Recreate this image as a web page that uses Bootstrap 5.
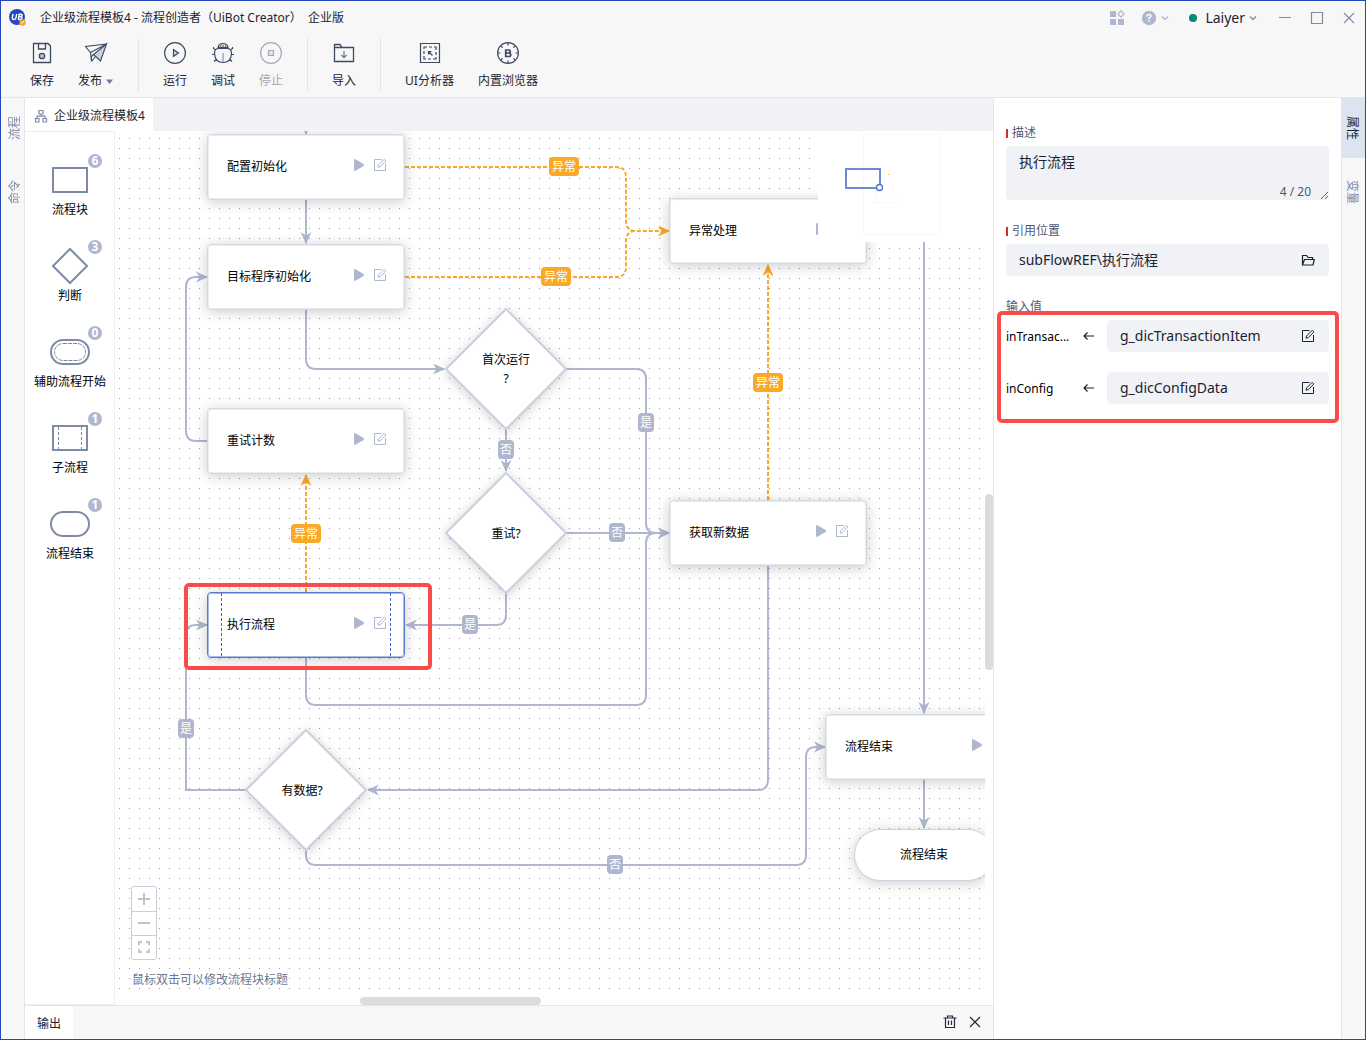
<!DOCTYPE html>
<html lang="zh-CN">
<head>
<meta charset="utf-8">
<meta name="viewport" content="width=device-width, initial-scale=1">
<title>企业级流程模板4 - 流程创造者</title>
<link href="https://cdn.jsdelivr.net/npm/bootstrap@5.3.0/dist/css/bootstrap.min.css" rel="stylesheet">
<style>
:root{--ink:#1b2333;--slate:#3d4a63;--muted:#7f8ba5;--edge:#afb6cf;--line:#e3e5eb;--chrome:#f7f7f7;--soft:#f0f2f6;--warn:#faa827;--alert:#fb4b48}
body{font-family:"Noto Sans","Noto Sans CJK SC",sans-serif;font-size:12px;line-height:18px;color:var(--ink);background:#fff}
svg{display:block;flex:none}
button,input,textarea{font:inherit;color:inherit;border:0;background:none;padding:0}
.app-shell{border:1px solid #2446b8;min-height:100vh}
.app-head{background:var(--chrome);border-bottom:1px solid var(--line)}
.title-row{height:33px;padding:0 0 0 8px}
.app-name{margin-left:14px}
.title-row .tools{color:var(--edge)}
.user-btn{font-size:14px;line-height:20px}
.user-btn svg{color:var(--muted)}
.online-dot{width:8px;height:8px;border-radius:50%;background:#028a76}
.win-btn{width:32px;color:var(--muted)}
.tool-row{padding:4px 17px 5px}
.tool-btn{padding:0 12px;height:54px;gap:6px;color:var(--ink)}
.tool-btn>svg{color:var(--slate);margin:0 -2px}
.tool-btn:disabled{color:#a3a7b0}
.tool-btn:disabled svg{color:#a3a9b8}
.tool-caret{margin-left:3px}
.tool-sep{width:1px;height:54px;margin:0 12px;background:var(--line)}
.side-rail{width:24px;background:var(--chrome);gap:4px}
.rail-left{border-right:1px solid var(--line)}
.rail-right{border-left:1px solid var(--line)}
.rail-tab{height:60px;width:100%;color:var(--muted)}
.rail-tab span{writing-mode:vertical-rl;text-orientation:sideways;line-height:16px}
.rail-left .rail-tab{padding-left:4px}
.rail-right .rail-tab{padding-right:4px}
.rail-left .rail-tab span{transform:rotate(180deg)}
.rail-tab.on{background:#dde3f1;color:var(--ink)}
.doc-tabs{height:33px;background:var(--soft)}
.doc-tab{background:#fff;padding:2px 8px 0 9px;gap:6px}
.palette{width:90px;border:1px solid #eceef3;border-left:0;padding:28px 0 0 1px}
.pal-item{margin-bottom:27px;gap:1px;cursor:grab;color:#000}
.pal-item svg{fill:none;stroke:#7f8ba5;stroke-width:2}
.pal-count{position:absolute;left:38px;top:-6px;width:14px;height:14px;border-radius:50%;background:var(--edge);color:#fff;font:bold 12px/14px "Open Sans",sans-serif;text-align:center}
.stage{padding:0 8px 8px 0;background:#fff}
.flow-view{overflow:hidden}
.flow-edges{position:absolute;left:0;top:0;width:100%;height:100%;pointer-events:none}
.flow-edges path{fill:none;stroke:var(--edge);stroke-width:2}
.flow-edges .err path{stroke:var(--warn);stroke-dasharray:4 2}
.flow-edges marker path{stroke:none;fill:var(--edge)}
.flow-edges marker.mk-err path{fill:var(--warn)}
.flow-node{position:absolute;width:198px;height:66px;border:1px solid #d3d9e3;outline:1px solid #e9edf2;outline-offset:-2px;border-radius:4px;background:#fff;box-shadow:0 2px 14px rgba(0,0,0,.2);color:#000;padding:0 17px 1px 19px}
.flow-node .acts{color:var(--edge);gap:8px;padding-bottom:4px}
.flow-node.picked{border-color:#5a79d0;outline-color:#a9baea}
.flow-node.picked::before,.flow-node.picked::after{content:"";position:absolute;top:0;bottom:0;width:1px;background:repeating-linear-gradient(#3f63c8 0 3px,transparent 3px 5px)}
.flow-node.picked::before{left:13px}
.flow-node.picked::after{right:13px}
.flow-decide{position:absolute;width:122px;height:122px;color:#000;line-height:19px;text-align:center}
.flow-decide svg{position:absolute;left:0;top:0;overflow:visible;filter:drop-shadow(0 2px 6px rgba(0,0,0,.18))}
.flow-decide span{position:relative}
.flow-end{position:absolute;width:140px;height:52px;border:1px solid #cdd2de;border-radius:26px;background:#fff;box-shadow:0 2px 14px rgba(0,0,0,.2);color:#000}
.edge-tag{position:absolute;transform:translate(-50%,-9px);background:var(--edge);color:#fff;border-radius:4px;padding:1px 2px;line-height:17px;white-space:nowrap}
.edge-tag.err{background:var(--warn);padding:1px 3px}
.mini-map{position:absolute;right:0;top:0;width:167px;height:111px;background:#fff}
.callout-box{position:absolute;border:4px solid var(--alert);border-radius:5px;pointer-events:none}
.zoom-box{position:absolute;left:16px;bottom:37px;width:26px;border:1px solid #c9cedb;border-radius:3px;background:#fff}
.zoom-box button{height:24px;color:#c4c4c4;padding-bottom:1px}
.zoom-box button+button{border-top:1px solid #c9cedb}
.flow-hint{position:absolute;left:17px;bottom:8px;color:#6b7893}
.thumb-y,.thumb-x{position:absolute;background:#dcdcdc;border-radius:4px}
.thumb-y{right:0;top:363px;width:8px;height:176px}
.thumb-x{left:245px;bottom:0;width:181px;height:8px}
.out-bar{height:34px;background:var(--chrome);border-top:1px solid var(--line);padding-right:12px}
.out-tab{padding:3px 12px 0;background:#fff;height:100%}
.out-acts{gap:12px;padding-bottom:1px}
.props{width:348px;border-left:1px solid var(--line);padding:24px 12px}
.props .cap{line-height:18px;padding-top:2px;margin-bottom:4px;color:#4e5870}
.props .must::before{content:"";width:2px;height:9px;background:#d9292b;margin-right:4px}
.field-box{background:var(--soft);border-radius:4px;height:32px;min-width:0;padding:0 14px 0 13px}
.field-box input,.note-box textarea{font-size:14px;line-height:20px;outline:0;min-width:0}
.note-box textarea{background:var(--soft);border-radius:4px;height:54px;padding:6px 13px;resize:vertical;display:block}
.note-count{position:absolute;right:18px;bottom:0;font-size:12px;line-height:16px;color:#4e5870}
.prop-block{margin-bottom:20px}
.arg-name{flex:none;width:70px;color:#000;padding-top:2px;white-space:nowrap}
.arg-arrow{margin:0 12px 0 7px}
.box-a{left:69px;top:452px;width:248px;height:87px}
.box-b{left:3px;top:213px;width:342px;height:112px}
#n1{left:92px;top:3px}#n2{left:92px;top:113px}#n3{left:92px;top:277px}#n4{left:92px;top:461px}
#n5{left:554px;top:67px}#n6{left:554px;top:369px}#n7{left:710px;top:583px}
#d1{left:330px;top:177px}#d2{left:330px;top:341px}#d3{left:130px;top:598px}#e1{left:739px;top:698px}
#t1{left:449px;top:35px}#t2{left:441px;top:145px}#t3{left:191px;top:402px}#t4{left:653px;top:251px}
#t5{left:531px;top:291px}#t6{left:391px;top:318px}#t7{left:502px;top:401px}#t8{left:355px;top:493px}#t9{left:71px;top:597px}#t10{left:500px;top:733px}
</style>
<script src="https://cdn.jsdelivr.net/npm/bootstrap@5.3.0/dist/js/bootstrap.bundle.min.js"></script>
</head>
<body>
<svg width="0" height="0" class="position-absolute" aria-hidden="true">
  <symbol id="i-play" viewBox="0 0 12 14"><path d="M1 2.200Q1 .6 2.400 1.300L10.600 6Q11.800 7 10.600 8L2.400 12.700Q1 13.400 1 11.800Z" fill="currentColor"/></symbol>
  <symbol id="i-edit" viewBox="0 0 14 14"><path d="M8.500 1.500H1.500V12.500H12.500V6" fill="none" stroke="currentColor"/><path d="M5 9.200L5.500 7L11.200 1.300L12.900 3L7.200 8.700Z" fill="none" stroke="currentColor"/></symbol>
  <symbol id="i-down" viewBox="0 0 8 8"><path d="M1 2.500L4 5.500L7 2.500" fill="none" stroke="currentColor" stroke-width="1.300"/></symbol>
  <symbol id="i-close" viewBox="0 0 12 12"><path d="M1 1L11 11M11 1L1 11" fill="none" stroke="currentColor" stroke-width="1.100"/></symbol>
  <symbol id="i-arrow" viewBox="0 0 12 10"><path d="M1 5H11M4.500 1.500L1 5L4.500 8.500" fill="none" stroke="currentColor" stroke-width="1.200"/></symbol>
</svg>

<div class="app-shell d-flex flex-column">
  <header class="app-head">
    <div class="title-row d-flex align-items-center">
      <svg width="17" height="17" viewBox="0 0 17 17"><circle cx="8" cy="8" r="8" fill="#2349c0"/><path d="M4 5L3.300 8.500Q3.200 10.500 5 10.500Q6.700 10.500 7 8.500L7.700 5M9.300 10.500L10.200 5.300H12Q13.600 5.600 12.800 7.200Q12.300 7.900 10.500 7.900H12Q13.600 8.300 12.700 9.800Q12.200 10.500 9.300 10.500" fill="none" stroke="#fff" stroke-width="1.400"/><circle cx="13.500" cy="13.500" r="3.200" fill="#f3a531"/><path d="M12.300 14.800L14.800 12.200" stroke="#fff"/></svg>
      <span class="app-name">企业级流程模板4 - 流程创造者（UiBot Creator）&nbsp; 企业版</span>
      <div class="tools d-flex align-items-center ms-auto">
        <button type="button" aria-label="应用" class="me-3"><svg width="16" height="16" viewBox="0 0 16 16" fill="currentColor"><path d="M1 1h6v6H1zM1 9h6v6H1zM9 9h6v6H9z"/><path d="M12 .9L15.100 4L12 7.100L8.900 4Z" fill="none" stroke="currentColor" stroke-width="1.200"/></svg></button>
        <button type="button" aria-label="帮助" class="d-flex align-items-center gap-1"><svg width="16" height="16" viewBox="0 0 16 16"><circle cx="8" cy="8" r="7.200" fill="currentColor"/><path d="M6 6.500Q6 4.500 8 4.500T10 6.300Q10 7.300 8 8.200V9.500M8 10.500V12" fill="none" stroke="#fff" stroke-width="1.400"/></svg><svg width="8" height="8"><use href="#i-down"/></svg></button>
      </div>
      <button type="button" class="user-btn d-flex align-items-center ms-3 me-2 ps-1"><span class="online-dot me-2"></span>Laiyer<svg class="ms-1" width="8" height="8"><use href="#i-down"/></svg></button>
      <button type="button" aria-label="最小化" class="win-btn ms-1"><svg class="mx-auto" width="14" height="14" viewBox="0 0 14 14"><path d="M1 6.500H13" stroke="currentColor"/></svg></button>
      <button type="button" aria-label="最大化" class="win-btn"><svg class="mx-auto" width="14" height="14" viewBox="0 0 14 14"><path d="M1.500 1.500H12.500V12.500H1.500Z" fill="none" stroke="currentColor" stroke-width="1.200"/></svg></button>
      <button type="button" aria-label="关闭" class="win-btn"><svg class="mx-auto" width="12" height="12"><use href="#i-close"/></svg></button>
    </div>
    <div class="tool-row d-flex">
      <button type="button" class="tool-btn d-flex flex-column align-items-center"><svg width="28" height="28" viewBox="0 0 28 28" fill="none" stroke="currentColor" stroke-width="1.300"><path d="M5.500 5.500H20L22.500 8V24.500H5.500Z"/><path d="M10.500 5.500V11H17.500V5.500"/><circle cx="14" cy="18" r="2.700" fill="#b9bfcd"/></svg>保存</button>
      <button type="button" class="tool-btn d-flex flex-column align-items-center"><svg width="28" height="28" viewBox="0 0 28 28" fill="none" stroke="currentColor" stroke-width="1.100"><path d="M24.500 6L11.500 16.500L18.500 23Z" fill="#c9cfdd"/><path d="M24.500 6L3.500 8.500L8.500 14.500L24.500 6M8.500 14.500L9.500 23.500V18.500L11.500 16.500M9.500 23.500L13.500 18.500"/></svg><span class="d-flex align-items-center">发布<svg class="tool-caret" width="9" height="5" viewBox="0 0 9 5"><path d="M1 .5H8L4.500 5Z" fill="#6f7c97"/></svg></span></button>
      <span class="tool-sep"></span>
      <button type="button" class="tool-btn d-flex flex-column align-items-center"><svg width="28" height="28" viewBox="0 0 28 28" fill="none" stroke="currentColor" stroke-width="1.200"><circle cx="14" cy="15" r="10.400"/><path d="M12.500 11.700V18.300L17.500 15Z" fill="#c9cfdd"/></svg>运行</button>
      <button type="button" class="tool-btn d-flex flex-column align-items-center"><svg width="28" height="28" viewBox="0 0 28 28" fill="none" stroke="currentColor" stroke-width="1.200"><path d="M9 9.500Q9.500 5.500 14 5.500T19 9.500Z" fill="#d7dbe5"/><path d="M5.500 15.500Q5.500 11 9 10.500H19Q22.500 11 22.500 15.500Q22 24.500 14 24.500T5.500 15.500ZM4.500 9V10.500L7 12M23.500 9V10.500L21 12M3 16.500H5.500M22.500 16.500H25M7.500 21L5 23.500M20.500 21L23 23.500"/><path d="M14 15V24" stroke="#8a94aa"/><path d="M11 8h1.500M13.500 8h1.500M16 8h1.500"/></svg>调试</button>
      <button type="button" class="tool-btn d-flex flex-column align-items-center" disabled><svg width="28" height="28" viewBox="0 0 28 28" fill="none" stroke="currentColor" stroke-width="1.200"><circle cx="14" cy="15" r="10.400"/><path d="M11.500 12.500H16.500V17.500H11.500Z" fill="#dfe2e8"/></svg>停止</button>
      <span class="tool-sep"></span>
      <button type="button" class="tool-btn d-flex flex-column align-items-center"><svg width="28" height="28" viewBox="0 0 28 28" fill="none" stroke="currentColor" stroke-width="1.300"><path d="M4.500 23.500V6.500H10L12 9.500H23.500V23.500ZM4.500 9.500H12"/><path d="M14 13V19.500M11.300 17L14 19.700L16.700 17" stroke="#6f7c97"/></svg>导入</button>
      <span class="tool-sep"></span>
      <button type="button" class="tool-btn d-flex flex-column align-items-center"><svg width="28" height="28" viewBox="0 0 28 28" fill="none" stroke="currentColor" stroke-width="1.200"><path d="M4.500 5.500H23.500V24.500H4.500Z"/><path d="M8 11V9H11M13 9H16M18 9H20V12M20 14V17M20 19V21H17M15 21H12M10 21H8V18M8 16V13M16.500 17.500L12.500 13.500M12.500 16.500V13.500H15.500"/></svg>UI分析器</button>
      <button type="button" class="tool-btn d-flex flex-column align-items-center"><svg width="28" height="28" viewBox="0 0 28 28" fill="none" stroke="currentColor" stroke-width="1.200"><circle cx="14" cy="15" r="10.400"/><path d="M14 4.500V7.500M14 22.500V25.500M3.500 15H6.500M21.500 15H24.500M6.600 7.600L8.600 9.600M21.400 7.600L19.400 9.600M6.600 22.400L8.600 20.400M21.400 22.400L19.400 20.400"/><path d="M11.700 12H14.500Q16.300 12 16.300 13.500T14.500 15H11.700M11.700 11.500V18.500H14.700Q16.700 18.500 16.700 16.700T14.700 15" stroke-width="1.700"/></svg>内置浏览器</button>
    </div>
  </header>

  <div class="d-flex flex-grow-1">
    <nav class="side-rail rail-left d-flex flex-column">
      <button type="button" class="rail-tab d-flex align-items-center justify-content-center"><span>流程</span></button>
      <button type="button" class="rail-tab d-flex align-items-center justify-content-center"><span>命令</span></button>
    </nav>

    <main class="d-flex flex-column flex-grow-1 overflow-hidden">
      <div class="doc-tabs d-flex">
        <button type="button" class="doc-tab d-flex align-items-center"><svg width="14" height="14" viewBox="0 0 14 14" fill="none" stroke="#7f8ba5" stroke-width="1.200"><path d="M5 1.500H9V5H5ZM1.500 9.500H5V13H1.500ZM9 9.500H12.500V13H9ZM7 5V7.200M3 9.500V7.200H11V9.500"/></svg>企业级流程模板4</button>
      </div>
      <div class="d-flex flex-grow-1">
        <aside class="palette d-flex flex-column align-items-center">
          <div class="pal-item d-flex flex-column align-items-center"><div class="position-relative"><svg width="40" height="40"><path d="M3 8H37V32H3Z"/></svg><span class="pal-count">6</span></div>流程块</div>
          <div class="pal-item d-flex flex-column align-items-center"><div class="position-relative"><svg width="40" height="40"><path d="M20 3L37 20L20 37L3 20Z"/></svg><span class="pal-count">3</span></div>判断</div>
          <div class="pal-item d-flex flex-column align-items-center"><div class="position-relative"><svg width="40" height="40"><rect x="1" y="8" width="38" height="24" rx="12"/><rect x="4.500" y="11.500" width="31" height="17" rx="8.500" stroke-width="1" stroke-dasharray="4 1"/></svg><span class="pal-count">0</span></div>辅助流程开始</div>
          <div class="pal-item d-flex flex-column align-items-center"><div class="position-relative"><svg width="40" height="40"><path d="M3 8H37V32H3Z"/><path d="M8.500 9V31M31.500 9V31" stroke-width="1" stroke-dasharray="3 2"/></svg><span class="pal-count">1</span></div>子流程</div>
          <div class="pal-item d-flex flex-column align-items-center"><div class="position-relative"><svg width="40" height="40"><rect x="1" y="8" width="38" height="24" rx="12"/></svg><span class="pal-count">1</span></div>流程结束</div>
        </aside>

        <section class="stage position-relative flex-grow-1">
          <div class="flow-view position-relative h-100">
            <svg class="flow-edges">
              <defs>
                <pattern id="dots" width="10" height="10" patternUnits="userSpaceOnUse"><rect x="4" y="7" width="1" height="1" fill="#999"/></pattern>
                <marker id="mk" markerUnits="userSpaceOnUse" markerWidth="12" markerHeight="12" refX="11" refY="6" orient="auto"><path d="M0 .5L12 6L0 11.500L3.500 6Z"/></marker>
                <marker id="mk2" class="mk-err" markerUnits="userSpaceOnUse" markerWidth="12" markerHeight="12" refX="11" refY="6" orient="auto"><path d="M0 .5L12 6L0 11.500L3.500 6Z"/></marker>
              </defs>
              <rect width="100%" height="100%" fill="url(#dots)"/>
              <g>
                <path marker-end="url(#mk)" d="M191 -20V3"/>
                <path marker-end="url(#mk)" d="M191 68V112"/>
                <path marker-end="url(#mk)" d="M191 178V228Q191 238 201 238H329"/>
                <path marker-end="url(#mk)" d="M451 238H521Q531 238 531 248V392Q531 402 541 402H554"/>
                <path marker-end="url(#mk)" d="M391 298V340"/>
                <path marker-end="url(#mk)" d="M451 402H554"/>
                <path marker-end="url(#mk)" d="M391 462V484Q391 494 381 494H291"/>
                <path marker-end="url(#mk)" d="M93 310H81Q71 310 71 300V156Q71 146 81 146H92"/>
                <path marker-end="url(#mk)" d="M191 526V564Q191 574 201 574H521Q531 574 531 564V412Q531 402 541 402H554"/>
                <path marker-end="url(#mk)" d="M653 434V649Q653 659 643 659H253"/>
                <path marker-end="url(#mk)" d="M131 659H71V504Q71 494 81 494H92"/>
                <path marker-end="url(#mk)" d="M191 719V724Q191 734 201 734H681Q691 734 691 724V626Q691 616 701 616H710"/>
                <path marker-end="url(#mk)" d="M809 20V582"/>
                <path marker-end="url(#mk)" d="M809 648V697"/>
              </g>
              <g class="err">
                <path marker-end="url(#mk2)" d="M290 36H501Q511 36 511 46V90Q511 100 521 100H554"/>
                <path d="M290 146H501Q511 146 511 136V110Q511 100 521 100"/>
                <path marker-end="url(#mk2)" d="M191 461V344"/>
                <path marker-end="url(#mk2)" d="M653 369V134"/>
              </g>
            </svg>

            <div class="flow-node d-flex align-items-center justify-content-between" id="n1"><span>配置初始化</span><span class="acts d-flex align-items-center"><svg width="12" height="14"><use href="#i-play"/></svg><svg width="14" height="14"><use href="#i-edit"/></svg></span></div>
            <div class="flow-node d-flex align-items-center justify-content-between" id="n2"><span>目标程序初始化</span><span class="acts d-flex align-items-center"><svg width="12" height="14"><use href="#i-play"/></svg><svg width="14" height="14"><use href="#i-edit"/></svg></span></div>
            <div class="flow-node d-flex align-items-center justify-content-between" id="n3"><span>重试计数</span><span class="acts d-flex align-items-center"><svg width="12" height="14"><use href="#i-play"/></svg><svg width="14" height="14"><use href="#i-edit"/></svg></span></div>
            <div class="flow-node picked d-flex align-items-center justify-content-between" id="n4"><span>执行流程</span><span class="acts d-flex align-items-center"><svg width="12" height="14"><use href="#i-play"/></svg><svg width="14" height="14"><use href="#i-edit"/></svg></span></div>
            <div class="flow-node d-flex align-items-center justify-content-between" id="n5"><span>异常处理</span><span class="acts d-flex align-items-center"><svg width="12" height="14"><use href="#i-play"/></svg><svg width="14" height="14"><use href="#i-edit"/></svg></span></div>
            <div class="flow-node d-flex align-items-center justify-content-between" id="n6"><span>获取新数据</span><span class="acts d-flex align-items-center"><svg width="12" height="14"><use href="#i-play"/></svg><svg width="14" height="14"><use href="#i-edit"/></svg></span></div>
            <div class="flow-node d-flex align-items-center justify-content-between" id="n7"><span>流程结束</span><span class="acts d-flex align-items-center"><svg width="12" height="14"><use href="#i-play"/></svg><svg width="14" height="14"><use href="#i-edit"/></svg></span></div>
            <div class="flow-decide d-flex align-items-center justify-content-center" id="d1"><svg width="122" height="122"><path d="M61 1L121 61L61 121L1 61Z" fill="#fff" stroke="#cbd0df" stroke-width="2"/></svg><span>首次运行<br>?</span></div>
            <div class="flow-decide d-flex align-items-center justify-content-center" id="d2"><svg width="122" height="122"><path d="M61 1L121 61L61 121L1 61Z" fill="#fff" stroke="#cbd0df" stroke-width="2"/></svg><span>重试?</span></div>
            <div class="flow-decide d-flex align-items-center justify-content-center pe-2" id="d3"><svg width="122" height="122"><path d="M61 1L121 61L61 121L1 61Z" fill="#fff" stroke="#cbd0df" stroke-width="2"/></svg><span>有数据?</span></div>
            <div class="flow-end d-flex align-items-center justify-content-center" id="e1">流程结束</div>

            <span class="edge-tag err" id="t1">异常</span><span class="edge-tag err" id="t2">异常</span><span class="edge-tag err" id="t3">异常</span><span class="edge-tag err" id="t4">异常</span>
            <span class="edge-tag" id="t5">是</span><span class="edge-tag" id="t6">否</span><span class="edge-tag" id="t7">否</span><span class="edge-tag" id="t8">是</span><span class="edge-tag" id="t9">是</span><span class="edge-tag" id="t10">否</span>

            <div class="mini-map"><svg width="167" height="111" viewBox="0 0 167 111" fill="none"><path d="M45.500 3.500H121.500V103.500H45.500Z" stroke="#f7f7f7"/><path d="M52 46h5M52 52h5M58 60v12M54 72h26M71 50h4v14h-6M76 66l6 6" stroke="#f8f8f9"/><path d="M28 38H62V57H28Z" stroke="#7089d6" stroke-width="2"/><circle cx="61.500" cy="56.500" r="3" fill="#fff" stroke="#4f6fcb" stroke-width="1.300"/><path d="M70 43.500h1" stroke="#faa827"/></svg></div>
            <div class="callout-box box-a"></div>
            <div class="zoom-box d-flex flex-column">
              <button type="button" aria-label="放大"><svg class="mx-auto" width="14" height="14" viewBox="0 0 14 14"><path d="M7 1V13M1 7H13" stroke="currentColor" stroke-width="2"/></svg></button>
              <button type="button" aria-label="缩小"><svg class="mx-auto" width="14" height="14" viewBox="0 0 14 14"><path d="M1 7H13" stroke="currentColor" stroke-width="2"/></svg></button>
              <button type="button" aria-label="适应画布"><svg class="mx-auto" width="14" height="14" viewBox="0 0 14 14"><path d="M2 5V2H5M9 2H12V5M12 9V12H9M5 12H2V9" fill="none" stroke="currentColor" stroke-width="2"/></svg></button>
            </div>
            <div class="flow-hint">鼠标双击可以修改流程块标题</div>
          </div>
          <div class="thumb-y"></div><div class="thumb-x"></div>
        </section>
      </div>
      <footer class="out-bar d-flex align-items-center">
        <button type="button" class="out-tab">输出</button>
        <div class="out-acts d-flex align-items-center ms-auto">
          <button type="button" aria-label="清空"><svg width="14" height="14" viewBox="0 0 14 14" fill="none" stroke="#222b3c" stroke-width="1.200"><path d="M.5 3H13.500M4.500 3V1H9.500V3M2.500 3V12.500H11.500V3M5.500 5.500V10M8.500 5.500V10"/></svg></button>
          <button type="button" aria-label="关闭输出"><svg width="12" height="12"><use href="#i-close"/></svg></button>
        </div>
      </footer>
    </main>

    <aside class="props position-relative flex-shrink-0">
      <div class="prop-block">
        <label class="cap must d-flex align-items-center" for="f-desc">描述</label>
        <div class="note-box position-relative"><textarea id="f-desc" class="w-100">执行流程</textarea><span class="note-count">4 / 20</span></div>
      </div>
      <div class="prop-block">
        <label class="cap must d-flex align-items-center" for="f-ref">引用位置</label>
        <div class="field-box d-flex align-items-center"><input id="f-ref" class="flex-grow-1" value="subFlowREF\执行流程"><button type="button" aria-label="打开文件夹"><svg width="14" height="14" viewBox="0 0 14 14" fill="none" stroke="currentColor" stroke-width="1.200"><path d="M1.500 12V2.500H5.500L7 4.500H11.500V6M1.500 12L3.500 6.500H13.300L12 12Z"/></svg></button></div>
      </div>
      <div class="cap">输入值</div>
      <div class="prop-block d-flex align-items-center">
        <label class="arg-name" for="f-a">inTransac...</label>
        <svg class="arg-arrow" width="12" height="10"><use href="#i-arrow"/></svg>
        <div class="field-box d-flex align-items-center flex-grow-1"><input id="f-a" class="flex-grow-1" value="g_dicTransactionItem"><button type="button" aria-label="编辑"><svg width="14" height="14"><use href="#i-edit"/></svg></button></div>
      </div>
      <div class="prop-block d-flex align-items-center">
        <label class="arg-name" for="f-b">inConfig</label>
        <svg class="arg-arrow" width="12" height="10"><use href="#i-arrow"/></svg>
        <div class="field-box d-flex align-items-center flex-grow-1"><input id="f-b" class="flex-grow-1" value="g_dicConfigData"><button type="button" aria-label="编辑"><svg width="14" height="14"><use href="#i-edit"/></svg></button></div>
      </div>
      <div class="callout-box box-b"></div>
    </aside>

    <nav class="side-rail rail-right d-flex flex-column">
      <button type="button" class="rail-tab on d-flex align-items-center justify-content-center"><span>属性</span></button>
      <button type="button" class="rail-tab d-flex align-items-center justify-content-center"><span>变量</span></button>
    </nav>
  </div>
</div>
</body>
</html>
